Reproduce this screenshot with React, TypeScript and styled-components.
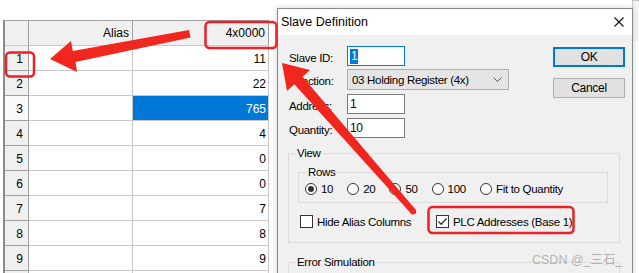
import React from 'react';
import styled, { createGlobalStyle } from 'styled-components';

const GlobalStyle = createGlobalStyle`
  html, body {
    margin: 0;
    padding: 0;
    background: #fff;
    overflow: hidden;
  }
`;

const UI = `"Liberation Sans", Arial, sans-serif`;

const Page = styled.div`
  position: relative;
  width: 639px;
  height: 273px;
  overflow: hidden;
  background: #fff;
  padding-top: 20px;
  box-sizing: border-box;
  font-family: "Liberation Sans", Arial, sans-serif;
`;

const Grid = styled.div`
  margin-left: 3px;
  display: grid;
  grid-template-columns: 24px 104px 136px;
  grid-auto-rows: 25px;
  width: max-content;
  border-top: 1px solid #a0a0a0;
  border-left: 2px solid #8c8c8c;
  font-size: 12px;
  color: #000;
`;

const HeadCell = styled.div`
  background: #f0f0f0;
  border-right: 1px solid #a0a0a0;
  border-bottom: 1px solid #c8c8c8;
  box-sizing: border-box;
  display: flex;
  align-items: center;
  justify-content: flex-end;
  padding-right: 3px;
`;

const RowHead = styled.div<{ $active?: boolean }>`
  background: ${p => (p.$active ? '#fafafa' : '#f0f0f0')};
  border-right: 1px solid #a0a0a0;
  border-bottom: 1px solid #a0a0a0;
  box-sizing: border-box;
  display: flex;
  align-items: center;
  justify-content: flex-end;
  padding-right: 5px;
  padding-top: 2px;
`;

const Cell = styled.div<{ $selected?: boolean }>`
  border-right: 1px solid #c8c8c8;
  border-bottom: 1px solid #c8c8c8;
  box-sizing: border-box;
  display: flex;
  align-items: center;
  justify-content: flex-end;
  padding-right: 2px;
  padding-top: 2px;
  background: ${p => (p.$selected ? '#0078d7' : '#fff')};
  color: ${p => (p.$selected ? '#fff' : '#000')};
`;

const Backdrop = styled.div`
  position: absolute;
  right: 0;
  top: 0;
  width: 6px;
  height: 40px;
  border-left: 1px solid #c8c8c8;
  border-top: 1px solid #c8c8c8;
  background: #f4f4f4;
`;

const Dialog = styled.div`
  position: absolute;
  left: 277px;
  top: 8px;
  width: 356px;
  height: 290px;
  border: 1px solid #8a8a8a;
  box-sizing: border-box;
  background: #f0f0f0;
  box-shadow: 0 0 6px rgba(0, 0, 0, 0.18);
  font-family: ${UI};
  font-size: 11px;
  letter-spacing: -0.3px;
  color: #000;
  display: flex;
  flex-direction: column;
`;

const TitleBar = styled.div`
  height: 26px;
  background: #fff;
  display: flex;
  align-items: center;
  justify-content: space-between;
  padding: 0 8px 0 3px;
  font-size: 12.5px;
  letter-spacing: 0;
`;

const Body = styled.div`
  padding: 11px 7px 0 10px;
  display: flex;
  flex-direction: column;
`;

const TopSection = styled.div`
  display: flex;
  align-items: flex-start;
`;

const Form = styled.div`
  display: grid;
  grid-template-columns: 59px auto;
  grid-template-rows: 23px 25px 24px 20px;
  align-items: start;
  font-size: 11.5px;
`;

const Label = styled.div`
  padding: 5px 0 0 1px;
  line-height: 14px;
  white-space: nowrap;
`;

const TextBox = styled.div<{ $focused?: boolean }>`
  width: 58px;
  height: 20px;
  box-sizing: border-box;
  background: #fff;
  border: 1px solid ${p => (p.$focused ? '#0078d7' : '#7a7a7a')};
  display: flex;
  align-items: center;
  padding-left: 2px;
  font-size: 12px;
`;

const Selected = styled.span`
  background: #0078d7;
  color: #fff;
  line-height: 15px;
  padding: 0 1px;
`;

const Select = styled.div`
  width: 162px;
  height: 21px;
  box-sizing: border-box;
  background: #e5e5e5;
  border: 1px solid #adadad;
  display: flex;
  align-items: center;
  justify-content: space-between;
  padding: 0 6px 0 4px;
`;

const Buttons = styled.div`
  margin-left: auto;
  margin-top: 1px;
  display: flex;
  flex-direction: column;
  gap: 11px;
  font-size: 12px;
`;

const Button = styled.div<{ $default?: boolean }>`
  width: 72px;
  height: 20px;
  box-sizing: border-box;
  background: #e1e1e1;
  border: ${p => (p.$default ? '2px solid #0078d7' : '1px solid #adadad')};
  display: flex;
  align-items: center;
  justify-content: center;
`;

const Group = styled.fieldset<{ $top: number; $left?: number }>`
  margin: ${p => p.$top}px 0 0 ${p => p.$left ?? 0}px;
  padding: 0 0 0 7px;
  border: 1px solid #dcdcdc;
  min-width: 0;
`;

const Legend = styled.legend<{ $shift?: number }>`
  padding: 0 1px;
  margin-left: ${p => p.$shift ?? 0}px;
  line-height: 14px;
  font-size: 11.5px;
`;

const ViewGroup = styled(Group)`
  margin-right: 5px;
  padding-bottom: 14px;
`;

const RowsGroup = styled(Group)`
  margin-right: 11px;
  padding: 0 0 6px 6px;
`;

const ErrorGroup = styled(Group)`
  margin-right: 5px;
  height: 40px;
`;

const RadioRow = styled.div`
  margin-top: 3px;
  display: flex;
  align-items: center;
  gap: 14px;
  height: 14px;
  font-size: 11.5px;
`;

const Option = styled.div`
  display: flex;
  align-items: center;
  gap: 4px;
  white-space: nowrap;
`;

const RadioCircle = styled.span<{ $on?: boolean }>`
  width: 12px;
  height: 12px;
  box-sizing: border-box;
  border: 1px solid #333;
  border-radius: 50%;
  background: #fff;
  display: flex;
  align-items: center;
  justify-content: center;
  &::after {
    content: '';
    width: 6px;
    height: 6px;
    border-radius: 50%;
    background: ${p => (p.$on ? '#333' : 'transparent')};
  }
`;

const CheckRow = styled.div`
  margin-top: 12px;
  margin-left: 4px;
  display: grid;
  grid-template-columns: 136px auto;
  align-items: center;
  height: 13px;
  font-size: 11.5px;
`;

const CheckBox = styled.span`
  width: 13px;
  height: 13px;
  box-sizing: border-box;
  border: 1px solid #333;
  background: #fff;
  display: flex;
  align-items: center;
  justify-content: center;
`;

const Overlay = styled.svg`
  position: absolute;
  left: 0;
  top: 0;
  pointer-events: none;
`;

const Watermark = styled.div`
  position: absolute;
  left: 532px;
  top: 249px;
  font-family: "Liberation Sans", "Noto Sans CJK SC", sans-serif;
  font-size: 12.5px;
  color: rgba(150, 150, 150, 0.7);
  white-space: nowrap;
`;

const values = ['11', '22', '765', '4', '0', '0', '7', '8', '9', ''];

const App: React.FC = () => {
  return (
    <Page>
      <GlobalStyle />
      <Grid>
        <HeadCell />
        <HeadCell>Alias</HeadCell>
        <HeadCell>4x0000</HeadCell>
        {values.map((v, i) => (
          <React.Fragment key={i}>
            <RowHead $active={i === 2}>{v === '' ? '' : i + 1}</RowHead>
            <Cell />
            <Cell $selected={i === 2}>{v}</Cell>
          </React.Fragment>
        ))}
      </Grid>

      <Backdrop />

      <Dialog>
        <TitleBar>
          <span>Slave Definition</span>
          <svg width="10" height="10" viewBox="0 0 10 10">
            <path d="M0.5 0.5 L9.5 9.5 M9.5 0.5 L0.5 9.5" stroke="#111" strokeWidth="1.1" />
          </svg>
        </TitleBar>
        <Body>
          <TopSection>
            <Form>
              <Label>Slave ID:</Label>
              <TextBox $focused>
                <Selected>1</Selected>
              </TextBox>
              <Label>Function:</Label>
              <Select>
                <span>03 Holding Register (4x)</span>
                <svg width="9" height="5" viewBox="0 0 9 5">
                  <path d="M0.5 0.5 L4.5 4.5 L8.5 0.5" fill="none" stroke="#555" strokeWidth="1" />
                </svg>
              </Select>
              <Label>Address:</Label>
              <TextBox>1</TextBox>
              <Label>Quantity:</Label>
              <TextBox>10</TextBox>
            </Form>
            <Buttons>
              <Button $default>OK</Button>
              <Button>Cancel</Button>
            </Buttons>
          </TopSection>

          <ViewGroup $top={8}>
            <Legend>View</Legend>
            <RowsGroup $top={5} $left={2}>
              <Legend $shift={2}>Rows</Legend>
              <RadioRow>
                <Option><RadioCircle $on />10</Option>
                <Option><RadioCircle />20</Option>
                <Option><RadioCircle />50</Option>
                <Option><RadioCircle />100</Option>
                <Option><RadioCircle />Fit to Quantity</Option>
              </RadioRow>
            </RowsGroup>
            <CheckRow>
              <Option><CheckBox />Hide Alias Columns</Option>
              <Option>
                <CheckBox>
                  <svg width="11" height="11" viewBox="0 0 11 11">
                    <path d="M1.5 5.5 L4.2 8.2 L9.5 2.5" fill="none" stroke="#333" strokeWidth="1.3" />
                  </svg>
                </CheckBox>
                PLC Addresses (Base 1)
              </Option>
            </CheckRow>
          </ViewGroup>

          <ErrorGroup $top={12}>
            <Legend>Error Simulation</Legend>
          </ErrorGroup>
        </Body>
      </Dialog>

      <Watermark>CSDN @_三石_</Watermark>

      <Overlay width="639" height="273" viewBox="0 0 639 273">
        <rect x="6" y="52.5" width="28" height="24" rx="4" fill="none" stroke="#eb2127" strokeWidth="2.5" />
        <rect x="205.5" y="22" width="71" height="26" rx="4" fill="none" stroke="#eb2127" strokeWidth="2.5" />
        <rect x="428.5" y="207" width="145" height="26" rx="4" fill="none" stroke="#eb2127" strokeWidth="2.5" />
        <polygon points="189,30 190.5,37.5 75.5,62 77,72 50,59 71,41 72.8,51" fill="#f0261f" />
        <polygon points="411,213.5 294.4,84.2 287,91 282,63 310,70 302.6,76.8 415.5,209.5" fill="#f0261f" />
        <circle cx="413.2" cy="211.5" r="3" fill="#f0261f" />
      </Overlay>
    </Page>
  );
};

export default App;
